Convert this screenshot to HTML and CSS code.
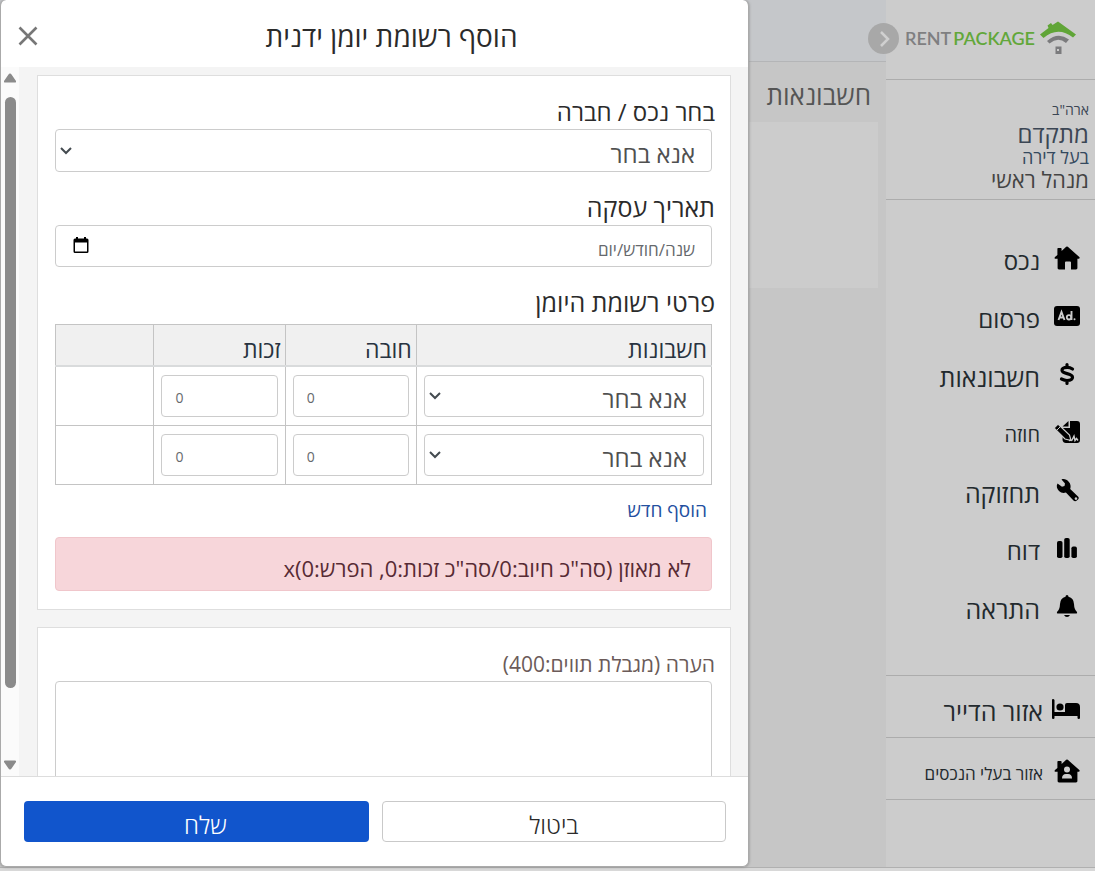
FILE: index.html
```html
<!DOCTYPE html>
<html lang="he" dir="rtl">
<head>
    <meta charset="utf-8">
    <title>Rent Package</title>
    <link rel="stylesheet" href="styles.css">
</head>
<body>
    <div class="app">
        <aside class="sidebar">
            <div class="brand">
                <svg class="brand-mark" width="36" height="34" viewBox="0 0 36 34" aria-hidden="true">
                    <path d="M0 13.500 8.500 7 7.500 4.500 11 2l1.500 2L18 .5 36 13.500 33 16.500Q18 5 3.500 17Z" fill="#60a537"/>
                    <path d="M7 20Q18 10.500 29 18.500l-3 3.500Q18 15.500 9.500 22.500Z" fill="#7b7b7d"/>
                    <path d="M15.500 25.500h6V33h-6z" fill="#7b7b7d"/>
                    <path d="M17 28h2v2h-2z" fill="#ccc"/>
                </svg>
                <div class="brand-name" dir="ltr">RENT<span>PACKAGE</span></div>
            </div>
            <button class="toggle" type="button" aria-label="תפריט">
                <svg width="31" height="31" viewBox="0 0 31 31"><path d="m13 9 7 7-7 7" fill="none" stroke="#d0d0d0" stroke-width="2.500"/></svg>
            </button>
            <div class="account">
                <span class="small">ארה"ב</span>
                <span class="plan">מתקדם</span>
                <span class="role">בעל דירה</span>
                <span class="admin">מנהל ראשי</span>
            </div>
            <nav class="menu">
                <a href="#">
                    <svg viewBox="0 0 26 24"><path d="M12.200.8q.8-.7 1.600 0L25.300 11c.8.8.3 1.800-.6 1.800h-1.300V22c0 .9-.5 1.400-1.400 1.400h-5V16.500q0-1-1-1h-4q-1 0-1 1v6.900H5c-.9 0-1.400-.5-1.400-1.400v-9.200H1.600c-1 0-1.400-1-.6-1.800L3.400 9V3c0-.6.4-1 1-1h2.200c.6 0 1 .4 1 1v2z"/></svg>
                    <span>נכס</span>
                </a>
                <a href="#">
                    <svg viewBox="0 0 26 24"><rect x="0" y="2" width="26" height="20" rx="3"/><path d="m4.500 16 3-8 3 8M5.500 13.500h4M17.500 7v9" fill="none" stroke="#ccc" stroke-width="1.900"/><circle cx="15" cy="13.300" r="2.200" fill="none" stroke="#ccc" stroke-width="1.800"/><circle cx="20.500" cy="15.300" r="1" fill="#ccc"/></svg>
                    <span>פרסום</span>
                </a>
                <a href="#">
                    <svg viewBox="0 0 26 24"><path d="M18.500 7Q16 5.300 13.500 5.300c-3.500 0-5.500 1-5.500 3 0 4.200 10.500 2.500 10.500 7 0 2.200-2 3.200-5.500 3.200-2.200 0-4-.8-5.500-1.500M13 2.500v2.800M13 18.500v3" fill="none" stroke="#000" stroke-width="3.200" stroke-linecap="round"/></svg>
                    <span class="large">חשבונאות</span>
                </a>
                <a href="#">
                    <svg viewBox="0 0 26 24"><path d="M16 1h7q3 0 3 3v16q0 3-3 3H12q-3 0-3.500-3l.500-12h7zM14.500 1v5.500H8.500z"/><path d="M0 8 4 4l11.500 11 1.500 5.500-6-1.500z" stroke="#ccc" stroke-width="1.200"/><path d="M2.500 10.500 6 7" stroke="#ccc" stroke-width="1"/><path d="m15 20.500 3-.5 2-4 1 4.500 1.500-2 1.500 2" fill="none" stroke="#ccc" stroke-width="1.400"/></svg>
                    <span class="compact">חוזה</span>
                </a>
                <a href="#">
                    <svg viewBox="0 0 26 24"><path fill-rule="evenodd" d="m24 18.500-7.800-7.500c.9-2.300.4-5.300-1.500-7.200C12.800 1.500 10 .5 7.500 1.500L11 5.500 10.500 8 8 8.800 3.500 5.500C2 8 3 11 5 13c1.900 1.900 4.600 2.400 6.900 1.500l7.600 8c1 1 2.300 1 3.300 0l1.200-1c1-1 1-2 0-3zM22 19.300a1.300 1.300 0 1 1-.1 0z"/></svg>
                    <span class="large">תחזוקה</span>
                </a>
                <a href="#">
                    <svg viewBox="0 0 26 24"><rect x="3" y="5" width="5.500" height="17" rx="1.800"/><rect x="10.200" y="2" width="5.500" height="20" rx="1.800"/><rect x="17.400" y="10.500" width="5.500" height="11.500" rx="1.800"/></svg>
                    <span>דוח</span>
                </a>
                <a href="#">
                    <svg viewBox="0 0 26 24"><path d="M13 1q1.500 0 1.500 1.700 5.300 1.500 5.500 7.300.2 5.500 3 8 .6 1.500-.8 1.500H3.800Q2.400 19.500 3 18q2.800-2.500 3-8 .2-5.800 5.500-7.300Q11.500 1 13 1zM10 21h6q-1 2-3 2t-3-2z"/></svg>
                    <span class="large">התראה</span>
                </a>
            </nav>
            <div class="areas">
                <a href="#">
                    <svg class="bed" viewBox="0 0 28 20"><path d="M0 1q0-1 1-1t1.500 1v12H13V6q0-2 2-2h9q4 0 4 4v11q0 1-1.200 1t-1.300-1v-2H2.500v2q0 1-1.300 1T0 19z"/><circle cx="8" cy="8" r="3.600"/></svg>
                    <span class="large">אזור הדייר</span>
                </a>
                <a href="#">
                    <svg viewBox="0 0 26 24"><path d="M12.200.8q.8-.7 1.600 0L25.300 11c.8.8.3 1.800-.6 1.800h-1.300V22c0 .9-.5 1.400-1.400 1.400H5c-.9 0-1.400-.5-1.400-1.400v-9.200H1.600c-1 0-1.400-1-.6-1.800L3.400 9V3c0-.6.4-1 1-1h2.200c.6 0 1 .4 1 1v2z"/><circle cx="13" cy="10.500" r="3" fill="#ccc"/><path d="M8 19.500q0-4.500 4-4.500h2q4 0 4 4.500z" fill="#ccc"/></svg>
                    <span class="small">אזור בעלי הנכסים</span>
                </a>
            </div>
        </aside>
        <main class="page">
            <div class="topbar"></div>
            <h1>חשבונאות</h1>
            <div class="panel"></div>
        </main>
    </div>

    <form class="modal" role="dialog" aria-labelledby="modalTitle">
        <header class="modal-header">
            <h2 id="modalTitle">הוסף רשומת יומן ידנית</h2>
            <button class="close" type="button" aria-label="סגור">
                <svg width="20" height="20" viewBox="0 0 20 20"><path d="m1.500 1.500 17 17m0-17-17 17" stroke="#777" stroke-width="2.600"/></svg>
            </button>
        </header>
        <div class="modal-body">
            <div class="modal-content">
                <section class="card">
                    <label for="property">בחר נכס / חברה</label>
                    <div class="control">
                        <select id="property"><option>אנא בחר</option></select>
                    </div>
                    <label class="large" for="date">תאריך עסקה</label>
                    <div class="control date">
                        <input id="date" type="text" placeholder="שנה/חודש/יום">
                        <svg width="16" height="16" viewBox="0 0 16 16"><path d="M3 0h2v1.500h6V0h2v1.500h1q1.500 0 1.500 1.500v11.500q0 1.500-1.500 1.500H2Q.5 16 .5 14.500V3Q.5 1.500 2 1.500h1zM2 5.500v9h12v-9z" fill-rule="evenodd"/></svg>
                    </div>
                    <h3 class="large">פרטי רשומת היומן</h3>
                    <table class="journal">
                        <thead>
                            <tr><th class="col-account">חשבונות</th><th class="col-amount">חובה</th><th class="col-amount">זכות</th><th></th></tr>
                        </thead>
                        <tbody>
                            <tr>
                                <td><select aria-label="חשבונות"><option>אנא בחר</option></select></td>
                                <td><input type="text" placeholder="0" aria-label="חובה"></td>
                                <td><input type="text" placeholder="0" aria-label="זכות"></td>
                                <td></td>
                            </tr>
                            <tr>
                                <td><select aria-label="חשבונות"><option>אנא בחר</option></select></td>
                                <td><input type="text" placeholder="0" aria-label="חובה"></td>
                                <td><input type="text" placeholder="0" aria-label="זכות"></td>
                                <td></td>
                            </tr>
                        </tbody>
                    </table>
                    <a class="add-new" href="#">הוסף חדש</a>
                    <div class="alert">לא מאוזן (סה"כ חיוב:0/סה"כ זכות:0, הפרש:0)x</div>
                </section>
                <section class="card">
                    <label class="note-label" for="note">הערה (מגבלת תווים:400)</label>
                    <div class="control"><textarea id="note"></textarea></div>
                </section>
            </div>
            <div class="scrollbar" aria-hidden="true">
                <svg width="12" height="10" viewBox="0 0 12 10"><path d="M6 .5Q7 .5 7.500 1.500L12 8q.3 1.500-1 1.500H1Q-.3 9.500 0 8l4.500-6.500Q5 .5 6 .5z" fill="#8b8b8b"/></svg>
                <div class="track"><div class="thumb"></div></div>
                <svg width="12" height="10" viewBox="0 0 12 10"><path d="M6 9.500Q5 9.500 4.500 8.500L0 2Q-.3.500 1 .500h10Q12.300.500 12 2L7.500 8.500Q7 9.500 6 9.500z" fill="#8b8b8b"/></svg>
            </div>
        </div>
        <footer class="modal-footer">
            <button class="cancel" type="button">ביטול</button>
            <button class="send" type="submit">שלח</button>
        </footer>
    </form>
</body>
</html>
```

FILE: styles.css
```css
* { box-sizing: border-box; }
body { margin: 0; background: #d8d8d8; color: #2b2b2b; font-family: "Open Sans", "Noto Sans", sans-serif; font-size: 16px; }
h1, h2, h3 { margin: 0; font-weight: 400; }
button, input, select, textarea { font-family: inherit; color: inherit; }
button { padding: 0; border: 0; background: none; cursor: pointer; }
a { color: inherit; text-decoration: none; }

.app { display: flex; height: calc(100vh - 3px); border-bottom: 1px solid #b0b0b0; }

/* sidebar */
.sidebar { position: relative; flex: 0 0 209px; background: #ccc; }
.brand { display: flex; align-items: center; gap: 5px; height: 80px; padding: 0 19px 3px 0; border-bottom: 1px solid #acacac; }
.brand-name { font-family: Lato, sans-serif; font-size: 18px; font-weight: 600; color: #7f7f81; }
.brand-name span { margin-left: 2px; color: #62a73a; }
.toggle { position: absolute; top: 23px; left: -18px; width: 31px; height: 31px; border-radius: 50%; background: #a8a8a8; }
.toggle svg { display: block; }
.account { display: flex; flex-direction: column; height: 120px; padding: 19px 6px 0 0; border-bottom: 1px solid #acacac; color: #3b4654; }
.account .small { font-size: 14px; line-height: 22px; }
.account .plan { font-size: 24px; line-height: 26px; }
.account .role { font-size: 18px; line-height: 20px; color: #34495e; }
.account .admin { font-size: 22px; line-height: 24px; color: #444; }
.menu { height: 476px; padding-top: 29px; border-bottom: 1px solid #acacac; }
.menu a, .areas a { display: flex; align-items: center; gap: 14px; height: 58px; padding-right: 15px; font-size: 24px; color: #232a2e; }
.menu svg, .areas svg { flex: none; width: 26px; height: 24px; }
.menu a span, .areas a span { padding-top: 5px; }
.menu .large, .areas .large { font-size: 25px; }
.menu .compact { font-size: 20px; }
.areas a { height: 62px; gap: 11px; padding-top: 4px; border-bottom: 1px solid #acacac; }
.areas .bed { width: 28px; height: 20px; }
.areas .large { margin-right: -2px; }
.areas .small { font-size: 17px; }

/* page behind the dialog */
.page { flex: 1; background: #c6c6c6; }
.topbar { height: 62px; background: #c5c7ca; border-bottom: 1px solid #b4b5b7; }
.page h1 { padding: 16px 15px 0 0; height: 60px; font-size: 26px; line-height: 34px; color: #555; }
.panel { height: 166px; margin-right: 8px; background: #ccc; }

/* dialog */
.modal { position: absolute; top: 0; left: 0; right: 346px; bottom: 4px; display: flex; flex-direction: column; border: 1px solid #aaa; border-top: 0; border-radius: 6px; background: #fff; box-shadow: 0 0 3px #888; overflow: hidden; }
.modal-header { display: flex; align-items: center; height: 67px; padding: 5px 17px 0; }
.modal-header h2 { flex: 1; padding-left: 14px; text-align: center; font-size: 28px; }
.close svg { display: block; }
.modal-body { display: flex; flex: 1; min-height: 0; background: #f4f4f4; }
.modal-content { flex: 1; padding: 8px 17px 0 18px; overflow: hidden; }
.scrollbar { display: flex; flex-direction: column; align-items: center; gap: 14px; width: 18px; padding: 6px 0; background: #fbfbfb; }
.scrollbar svg { flex: none; }
.track { flex: 1; }
.thumb { width: 11px; height: 91%; border-radius: 6px; background: #8b8b8b; }

.card { margin-bottom: 17px; padding: 18px 15px 18px 17px; border: 1px solid #dedede; background: #fff; }
.card label, .card h3 { display: block; height: 35px; line-height: 36px; font-size: 24px; }
.card .large { font-size: 25px; line-height: 34px; }
.card h3 { height: 39px; }
.control { margin: 0 3px 18px 0; }
.control select { display: block; width: 100%; height: 43px; }
.control input { display: block; width: 100%; height: 42px; }
.card select, .card input, .card textarea { border: 1px solid #ccc; border-radius: 4px; background-color: #fff; }
.card select { padding: 7px 16px 0; font-size: 24px; line-height: 32px; color: #505050; appearance: none; background-image: url("data:image/svg+xml,%3Csvg xmlns='http://www.w3.org/2000/svg' width='12' height='8'%3E%3Cpath d='m1 1 5 5 5-5' fill='none' stroke='%23444b50' stroke-width='2'/%3E%3C/svg%3E"); background-repeat: no-repeat; background-position: 4px center; }
.card input { padding: 6px 16px 0; font-size: 17px; }
.card input::placeholder { color: #66696d; }
.date { position: relative; }
.date svg { position: absolute; top: 12px; left: 18px; }
.journal { width: calc(100% - 3px); margin-right: 3px; border-collapse: collapse; table-layout: fixed; }
.journal th, .journal td { border: 1px solid #c4c4c4; }
.journal th { height: 41px; padding: 8px 4px 0; background: #f0f0f0; border-bottom: 2px solid #d9dbdc; font-size: 23px; font-weight: 400; line-height: 30px; text-align: right; color: #283340; }
.journal td { padding: 8px 7px; }
.journal .col-account { width: 45%; }
.journal .col-amount { width: 20%; }
.journal select, .journal input { display: block; width: 100%; height: 42px; }
.journal select { padding-top: 6px; }
.journal input { padding: 4px 13px 0; direction: ltr; font-size: 14px; }
.add-new { display: block; width: max-content; margin: 11px 8px 0 0; height: 41px; font-size: 19px; line-height: 28px; color: #2450a0; }
.alert { height: 54px; margin-right: 3px; padding: 8px 20px 0; border: 1px solid #f0c6cb; border-radius: 4px; background: #f7d6da; font-size: 22px; line-height: 44px; color: #572b34; }
.card .note-label { font-size: 21px; color: #6b5b59; }
.card textarea { display: block; width: 100%; height: 140px; resize: none; }

.modal-footer { display: flex; gap: 13px; height: 90px; padding: 24px 22px 0 23px; border-top: 1px solid #ddd; }
.modal-footer button { flex: 1 1 50%; height: 41px; padding-top: 6px; border-radius: 4px; font-size: 24px; font-weight: 300; line-height: 32px; }
.modal-footer .cancel { border: 1px solid #c9c9c9; }
.modal-footer .send { padding-left: 18px; background: #1155cc; color: #fff; }
```
